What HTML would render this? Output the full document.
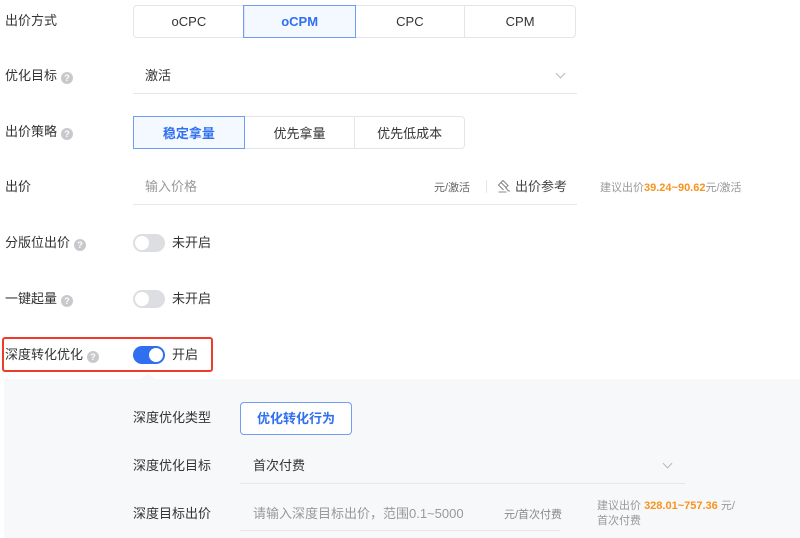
<!DOCTYPE html>
<html><head><meta charset="utf-8"><style>
*{margin:0;padding:0;box-sizing:border-box}
body{width:800px;height:538px;background:#fff;position:relative;overflow:hidden;font-family:"Liberation Sans","Noto Sans CJK SC",sans-serif;font-size:13px;color:#333}
.a{position:absolute;white-space:nowrap;line-height:16px}
.lbl{position:absolute;left:5px;line-height:16px;color:#333;font-size:13px;white-space:nowrap}
.q{display:inline-block;width:12px;height:12px;border-radius:50%;background:#c8c9cc;color:#fff;font-size:9px;line-height:12px;text-align:center;vertical-align:-1px;margin-left:4px;font-weight:bold}
.seg{position:absolute;display:flex;border:1px solid #e3e5e8;border-radius:4px;overflow:visible}
.seg div{height:100%;display:flex;align-items:center;justify-content:center;border-left:1px solid #e3e5e8;color:#333;font-size:13px}
.seg div:first-child{border-left:none}
.seg .on{background:#f4f8ff;outline:1px solid #6f9cf5;color:#2f6ff0;font-weight:bold;position:relative}
.line{position:absolute;height:1px;background:#e6e7ea}
.tg{position:absolute;width:32px;height:18px;border-radius:9px;background:#dcdee2}
.tg::after{content:"";position:absolute;top:2px;left:2px;width:14px;height:14px;border-radius:50%;background:#fff}
.tg.on{background:#2f6ff0}
.tg.on::after{left:16px}
.chev{position:absolute;width:7px;height:7px;border-right:1px solid #b5b8bd;border-bottom:1px solid #b5b8bd;transform:rotate(45deg)}
.g{color:#999}
.o{color:#f7931e;font-weight:bold}
</style></head><body>
<div class="lbl" style="top:13px">出价方式</div>
<div class="seg" style="left:133px;top:5px;width:443px;height:33px">
<div style="width:110px">oCPC</div><div class="on" style="width:111px">oCPM</div><div style="width:110px">CPC</div><div style="width:111px">CPM</div></div>

<div class="lbl" style="top:68px">优化目标<span class="q">?</span></div>
<div class="a" style="left:145px;top:68px">激活</div>
<div class="chev" style="left:557px;top:70px"></div>
<div class="line" style="left:133px;top:93px;width:444px"></div>

<div class="lbl" style="top:124px">出价策略<span class="q">?</span></div>
<div class="seg" style="left:133px;top:116px;width:332px;height:33px">
<div class="on" style="width:110px">稳定拿量</div><div style="width:111px">优先拿量</div><div style="width:110px">优先低成本</div></div>

<div class="lbl" style="top:179px">出价</div>
<div class="a g" style="left:145px;top:179px">输入价格</div>
<div class="a" style="left:434px;top:180px;font-size:11px;color:#666">元/激活</div>
<div class="a" style="left:486px;top:180px;width:1px;height:13px;background:#e3e5e8"></div>
<svg class="a" style="left:497px;top:179px" width="15" height="15" viewBox="0 0 15 15" fill="none" stroke="#888" stroke-width="1.1"><path d="M6 1.5l5 5-2 2-5-5zM4 3.5l-2.5 2.5 5 5M8.5 8.5l3 3.5H13M1.5 13h8"/></svg>
<div class="a" style="left:515px;top:179px;color:#444">出价参考</div>
<div class="line" style="left:133px;top:204px;width:444px"></div>
<div class="a" style="left:600px;top:180px;font-size:11px;color:#999">建议出价<span class="o">39.24~90.62</span>元/激活</div>

<div class="lbl" style="top:235px">分版位出价<span class="q">?</span></div>
<div class="tg" style="left:133px;top:234px"></div>
<div class="a" style="left:172px;top:235px">未开启</div>

<div class="lbl" style="top:291px">一键起量<span class="q">?</span></div>
<div class="tg" style="left:133px;top:290px"></div>
<div class="a" style="left:172px;top:291px">未开启</div>

<div class="a" style="left:2px;top:337px;width:211px;height:35px;border:2px solid #f03a2a;border-radius:3px"></div>
<div class="lbl" style="top:347px">深度转化优化<span class="q">?</span></div>
<div class="tg on" style="left:133px;top:346px"></div>
<div class="a" style="left:172px;top:347px">开启</div>

<div class="a" style="left:4px;top:379px;width:796px;height:159px;background:#f7f8fa"></div>
<div class="a" style="left:141px;top:373px;width:0;height:0;border-left:7px solid transparent;border-right:7px solid transparent;border-bottom:6px solid #f7f8fa"></div>

<div class="a" style="left:133px;top:410px">深度优化类型</div>
<div class="a" style="left:240px;top:402px;width:112px;height:33px;border:1px solid #6f9cf5;border-radius:4px;background:#fff;color:#2f6ff0;font-weight:bold;text-align:center;line-height:31px">优化转化行为</div>

<div class="a" style="left:133px;top:458px">深度优化目标</div>
<div class="a" style="left:253px;top:458px">首次付费</div>
<div class="chev" style="left:664px;top:460px"></div>
<div class="line" style="left:240px;top:483px;width:445px"></div>

<div class="a" style="left:133px;top:506px">深度目标出价</div>
<div class="a g" style="left:253px;top:506px">请输入深度目标出价，范围0.1~5000</div>
<div class="a" style="left:504px;top:507px;font-size:11px;color:#888">元/首次付费</div>
<div class="line" style="left:240px;top:530px;width:320px"></div>
<div class="a" style="left:597px;top:499px;font-size:11px;color:#999;line-height:15px">建议出价 <span class="o">328.01~757.36</span> 元/<br>首次付费</div>
</body></html>
